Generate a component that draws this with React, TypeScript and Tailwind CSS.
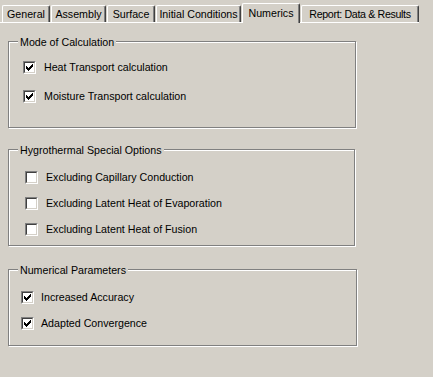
import React from 'react';

const tabs = [
  { label: 'General', w: 'w-[48px]', ml: 'ml-0' },
  { label: 'Assembly', w: 'w-[55px]', ml: 'ml-[1px]' },
  { label: 'Surface', w: 'w-[48px]', ml: 'ml-[1px]' },
  { label: 'Initial Conditions', w: 'w-[85px]', ml: 'ml-[1px]' },
  { label: 'Numerics', w: 'w-[58px]', ml: 'ml-[1px]', active: true },
  { label: 'Report: Data & Results', w: 'w-[118px]', ml: 'ml-[1px]' },
];

function Check() {
  // classic 7x7 pixel check mark
  const rows = ['......#', '.....##', '#...###', '##.###.', '#####..', '.###...', '..#....'];
  return (
    <svg width="7" height="7" viewBox="0 0 7 7" shapeRendering="crispEdges" className="block">
      {rows.flatMap((r, y) =>
        r.split('').map((c, x) => (c === '#' ? <rect key={`${x}-${y}`} x={x} y={y} width="1" height="1" fill="#000" /> : null))
      )}
    </svg>
  );
}

function Checkbox({ checked }: { checked?: boolean }) {
  return (
    <div className="h-[13px] w-[13px] shrink-0 border border-t-[#808080] border-l-[#808080] border-r-white border-b-white">
      <div className="flex h-[11px] w-[11px] items-start justify-start border border-t-[#404040] border-l-[#404040] border-r-[#d4d0c8] border-b-[#d4d0c8] bg-white p-[1px]">
        {checked && <Check />}
      </div>
    </div>
  );
}

function Option({ label, checked, gap }: { label: string; checked?: boolean; gap: string }) {
  return (
    <div className="flex h-[13px] items-center">
      <Checkbox checked={checked} />
      <span className={`${gap} whitespace-nowrap leading-[13px]`}>{label}</span>
    </div>
  );
}

function Group({ title, className, children }: { title: string; className: string; children: React.ReactNode }) {
  return (
    <div className={`relative border border-[#808080] shadow-[inset_1px_1px_0_#fff,1px_1px_0_#fff] ${className}`}>
      <span className="absolute left-[9px] top-[-6px] bg-[#d4d0c8] px-[2px] leading-[13px] whitespace-nowrap">{title}</span>
      {children}
    </div>
  );
}

export default function App() {
  return (
    <div className="h-[377px] w-[433px] overflow-hidden bg-[#d4d0c8] font-['Liberation_Sans',Arial,sans-serif] text-[10.67px] text-black">
      {/* tab strip */}
      <div className="flex h-[23px] w-[419px] items-end border-b border-white pl-[2px]">
        {tabs.map((t) =>
          t.active ? (
            <div
              key={t.label}
              className={`${t.w} ${t.ml} relative z-10 -mb-[1px] flex h-[20px] items-center justify-center whitespace-nowrap rounded-t-[2px] border-l border-t border-r border-l-white border-t-white border-r-[#404040] bg-[#d4d0c8] pb-[2px] shadow-[inset_-1px_0_0_#808080]`}
            >
              {t.label}
            </div>
          ) : (
            <div
              key={t.label}
              className={`${t.w} ${t.ml} flex h-[17px] items-center justify-center whitespace-nowrap rounded-t-[2px] border-l border-t border-r border-l-white border-t-white border-r-[#404040] shadow-[inset_-1px_0_0_#808080] ${t.label.startsWith('Report') ? 'tracking-[-0.35px]' : ''}`}
            >
              {t.label}
            </div>
          )
        )}
      </div>

      {/* panel */}
      <div className="flex flex-col pl-[8px] pt-[18px]">
        <Group title="Mode of Calculation" className="h-[87px] w-[348px]">
          <div className="flex flex-col gap-[16px] pl-[14px] pt-[19px]">
            <Option label="Heat Transport calculation" checked gap="ml-[8px]" />
            <Option label="Moisture Transport calculation" checked gap="ml-[8px]" />
          </div>
        </Group>

        <Group title="Hygrothermal Special Options" className="mt-[21px] h-[97px] w-[347px]">
          <div className="flex flex-col gap-[13px] pl-[16px] pt-[21px]">
            <Option label="Excluding Capillary Conduction" gap="ml-[8px]" />
            <Option label="Excluding Latent Heat of Evaporation" gap="ml-[8px]" />
            <Option label="Excluding Latent Heat of Fusion" gap="ml-[8px]" />
          </div>
        </Group>

        <Group title="Numerical Parameters" className="mt-[23px] h-[77px] w-[349px]">
          <div className="flex flex-col gap-[13px] pl-[12px] pt-[21px]">
            <Option label="Increased Accuracy" checked gap="ml-[7px]" />
            <Option label="Adapted Convergence" checked gap="ml-[7px]" />
          </div>
        </Group>
      </div>
    </div>
  );
}
